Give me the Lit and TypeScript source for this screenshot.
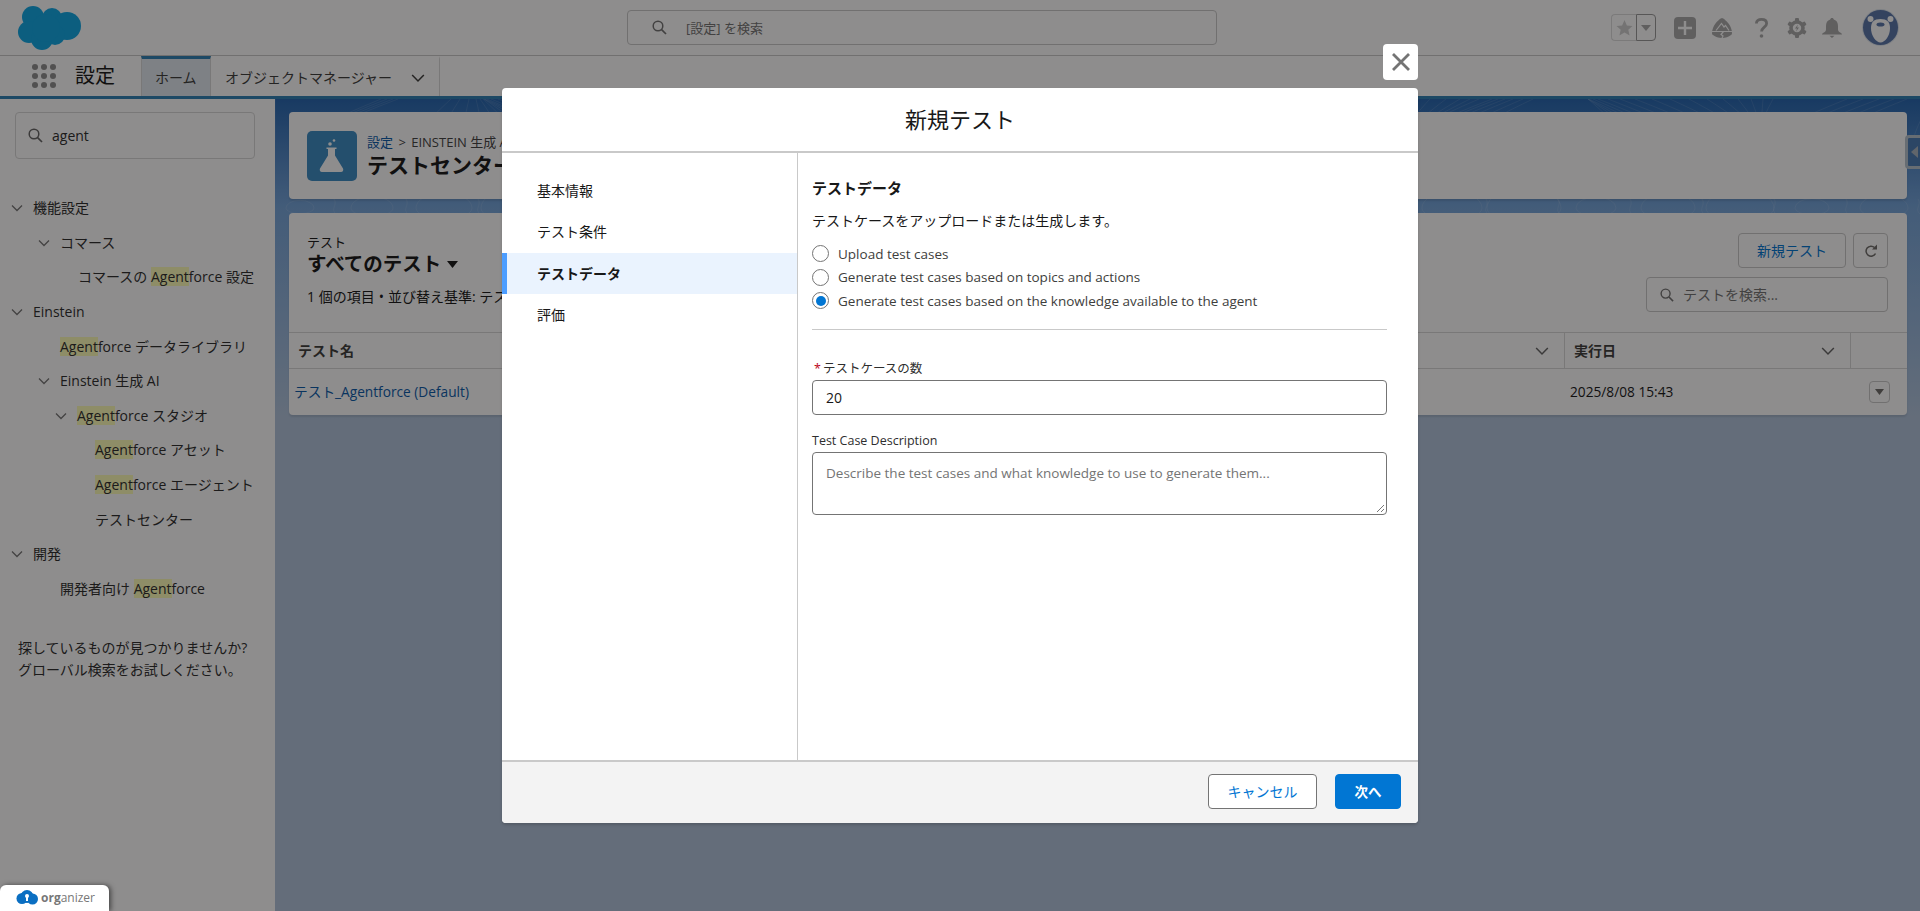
import { LitElement, css, html, svg } from "lit";
import { customElement } from "lit/decorators.js";

interface TreeRow {
  text: string;
  indent: number;
  open?: boolean;
}

const TREE: TreeRow[] = [
  { text: "機能設定", indent: 33, open: true },
  { text: "コマース", indent: 60, open: true },
  { text: "コマースの Agentforce 設定", indent: 78 },
  { text: "Einstein", indent: 33, open: true },
  { text: "Agentforce データライブラリ", indent: 60 },
  { text: "Einstein 生成 AI", indent: 60, open: true },
  { text: "Agentforce スタジオ", indent: 77, open: true },
  { text: "Agentforce アセット", indent: 95 },
  { text: "Agentforce エージェント", indent: 95 },
  { text: "テストセンター", indent: 95 },
  { text: "開発", indent: 33, open: true },
  { text: "開発者向け Agentforce", indent: 60 },
];

const STEPS = ["基本情報", "テスト条件", "テストデータ", "評価"];

const RADIOS = [
  "Upload test cases",
  "Generate test cases based on topics and actions",
  "Generate test cases based on the knowledge available to the agent",
];

const chevron = (size = 12) => html`
  <svg class="chev" width=${size} height=${size} viewBox="0 0 12 12">
    <path d="M1 3.5 6 8.5 11 3.5" fill="none" stroke="currentColor" stroke-width="1.3" />
  </svg>
`;

const searchIcon = (size = 15) => html`
  <svg width=${size} height=${size} viewBox="0 0 15 15">
    <circle cx="6" cy="6" r="4.8" fill="none" stroke="currentColor" stroke-width="1.5" />
    <path d="M9.6 9.6 14 14" fill="none" stroke="currentColor" stroke-width="1.7" />
  </svg>
`;

// contour lines behind the cards
function contours() {
  const paths = [];
  for (let i = 0; i < 170; i++) {
    if (Math.sin(i * 0.55) + Math.sin(i * 0.21) > 0.5) continue;
    const x = 275 + i * 10 + 14 * Math.sin(i * 0.4);
    const lean = 34 * Math.sin(i * 0.17);
    paths.push(
      `M${(x + lean).toFixed(0)} 99 C${x.toFixed(0)} 112 ${(x - lean).toFixed(0)} 125 ${(x - lean * 1.5).toFixed(0)} 140`
    );
  }
  for (let i = 0; i < 24; i++) {
    const cx = 300 + i * 72;
    const r = 14 + ((i * 7) % 24);
    paths.push(`M${cx - r} 208 a${r} ${r * 0.55} 0 1 1 ${r * 2} 0 a${r} ${r * 0.4} 0 1 1 ${-r * 2} 0`);
    paths.push(`M${cx + 34} 199 C${cx + 38} 205 ${cx + 30} 209 ${cx + 36} 214`);
  }
  return paths.map(
    (d) => svg`<path d=${d} fill="none" stroke="#fff" stroke-opacity="0.1" stroke-width="1" />`
  );
}

@customElement("app-root")
export class AppRoot extends LitElement {
  static styles = css`
    :host {
      display: block;
      position: relative;
      height: 100vh;
      overflow: hidden;
      background: #fff;
      color: #181818;
      font: 14px/20px "Open Sans", "Noto Sans CJK JP", sans-serif;
    }
    svg {
      display: block;
      flex: none;
    }
    .page {
      display: flex;
      flex-direction: column;
      height: 100%;
    }

    /* global header */
    .top {
      display: grid;
      grid-template-columns: 627px 590px 1fr;
      align-items: center;
      height: 55px;
      flex: none;
      border-bottom: 1px solid #c9c9c9;
      box-sizing: content-box;
    }
    .logo {
      margin-left: 18px;
    }
    .global-search {
      display: flex;
      align-items: center;
      gap: 19px;
      height: 35px;
      padding-left: 24px;
      box-sizing: border-box;
      border: 1px solid #c9c9c9;
      border-radius: 4px;
      color: #747474;
      font-size: 13px;
    }
    .top-icons {
      display: flex;
      align-items: center;
      justify-content: flex-end;
      padding-right: 21px;
      color: #ababab;
    }
    .fav {
      display: flex;
      height: 27px;
      margin-right: 18px;
    }
    .fav span {
      display: flex;
      align-items: center;
      justify-content: center;
      box-sizing: border-box;
    }
    .fav .star {
      width: 25px;
      border: 1px solid #ddd;
      border-right: 0;
      border-radius: 4px 0 0 4px;
    }
    .fav .more {
      width: 20px;
      border: 1px solid #9a9a9a;
      border-radius: 0 4px 4px 0;
    }
    .avatar {
      margin-left: 20px;
    }

    /* app nav */
    .nav {
      display: flex;
      height: 40px;
      flex: none;
      align-items: stretch;
    }
    .waffle {
      display: grid;
      grid-template-columns: repeat(3, 6px);
      gap: 3px;
      align-content: center;
      margin-left: 32px;
      width: 43px;
    }
    .waffle i {
      width: 6px;
      height: 6px;
      border-radius: 50%;
      background: #8f8f8f;
    }
    .app-name {
      width: 66px;
      font-size: 20px;
      line-height: 40px;
    }
    .tab {
      display: flex;
      align-items: center;
      padding: 0 14px;
      color: #3e3e3c;
      border-top: 3px solid transparent;
      box-sizing: border-box;
      white-space: nowrap;
    }
    .tab.home {
      width: 70px;
      padding: 0 13px;
      background: #e2e9f0;
      border-top-color: #2f82b5;
      border-right: 1px solid #d8d8d8;
      border-left: 1px solid #d8d8d8;
    }
    .tab.objects {
      width: 229px;
      justify-content: space-between;
      border-right: 1px solid #d8d8d8;
    }
    .stripe {
      height: 3px;
      flex: none;
      background: #2f82b5;
    }

    /* body */
    .body {
      display: flex;
      flex: 1;
      min-height: 0;
    }
    .side {
      width: 275px;
      flex: none;
      box-sizing: border-box;
      padding-top: 13px;
      color: #2e2e2e;
    }
    .side-search {
      display: flex;
      align-items: center;
      gap: 9px;
      height: 47px;
      margin: 0 20px 0 15px;
      padding-left: 12px;
      box-sizing: border-box;
      border: 1px solid #d8d8d8;
      border-radius: 4px;
      color: #666;
    }
    .side-search span {
      color: #2e2e2e;
    }
    .tree {
      margin-top: 32px;
    }
    .row {
      display: flex;
      align-items: center;
      height: 34.6px;
      white-space: nowrap;
      position: relative;
    }
    .row .chev {
      margin-left: -22px;
      margin-right: 10px;
      color: #777;
    }
    mark {
      background: #ffffba;
      color: inherit;
    }
    .miss {
      margin: 31px 0 0 18px;
      line-height: 22px;
    }

    .main {
      flex: 1;
      position: relative;
      padding: 13px 13px 0 14px;
      background: linear-gradient(180deg, #2666b0 0, #75a5db 108px, #b2c5dd 320px);
      overflow: hidden;
    }
    .lines {
      position: absolute;
      left: -275px;
      top: -99px;
    }
    .card {
      position: relative;
      background: #fff;
      border-radius: 4px;
      box-shadow: 0 2px 2px rgba(0, 0, 0, 0.1);
    }
    .head-card {
      display: flex;
      align-items: center;
      gap: 10px;
      height: 87px;
      padding-left: 18px;
      margin-bottom: 14px;
    }
    .flask {
      width: 50px;
      height: 50px;
      border-radius: 5px;
      background: #3c8dc5;
    }
    .crumb {
      font-size: 13px;
      line-height: 18px;
      color: #444;
      white-space: nowrap;
    }
    .crumb a {
      color: #0b5cab;
      margin-right: 2px;
    }
    .crumb i {
      font-style: normal;
      margin-right: 2px;
    }
    .page-title {
      font-size: 21px;
      line-height: 28px;
      font-weight: 700;
      white-space: nowrap;
    }
    .handle {
      position: absolute;
      right: 0;
      top: 36px;
      width: 15px;
      height: 34px;
      box-sizing: border-box;
      border: 3px solid #b8c4d0;
      border-right: 0;
      border-radius: 4px 0 0 4px;
      background: #4a7db5;
      display: flex;
      align-items: center;
      justify-content: center;
    }
    .list-top {
      display: flex;
      justify-content: space-between;
      height: 119px;
      padding: 20px 19px 0 18px;
      box-sizing: border-box;
    }
    .eyebrow {
      font-size: 13px;
      line-height: 18px;
    }
    .list-name {
      display: flex;
      align-items: center;
      gap: 6px;
      font-size: 19.5px;
      line-height: 26px;
      font-weight: 700;
    }
    .meta {
      margin-top: 10px;
      white-space: nowrap;
    }
    .meta i {
      font-style: normal;
      margin: 0 4px;
    }
    .tools {
      display: flex;
      flex-direction: column;
      align-items: flex-end;
      gap: 9px;
    }
    .tool-row {
      display: flex;
      gap: 7px;
    }
    .btn {
      display: flex;
      align-items: center;
      justify-content: center;
      height: 35px;
      box-sizing: border-box;
      border: 1px solid #c9c9c9;
      border-radius: 4px;
      background: #fff;
      color: #0176d3;
    }
    .btn.new {
      width: 108px;
    }
    .btn.icon {
      width: 35px;
      color: #706e6b;
    }
    .list-search {
      display: flex;
      align-items: center;
      gap: 9px;
      width: 242px;
      height: 35px;
      padding-left: 13px;
      box-sizing: border-box;
      border: 1px solid #c9c9c9;
      border-radius: 4px;
      color: #747474;
    }
    .thead,
    .tbody {
      display: grid;
      grid-template-columns: 1fr 286px 56px;
      align-items: center;
    }
    .thead {
      height: 37px;
      border-top: 1px solid #d8d8d8;
      border-bottom: 1px solid #d8d8d8;
      box-sizing: border-box;
      font-weight: 700;
      color: #3e3e3c;
    }
    .th {
      display: flex;
      align-items: center;
      justify-content: space-between;
      height: 100%;
      padding: 0 15px 0 9px;
      box-sizing: border-box;
      border-right: 1px solid #d8d8d8;
    }
    .th .chev {
      color: #666;
    }
    .tbody {
      height: 46px;
      font-size: 13.7px;
    }
    .td-link {
      padding-left: 5px;
      color: #0b5cab;
    }
    .td-date {
      padding-left: 5px;
    }
    .row-menu {
      width: 21px;
      height: 22px;
      margin-left: 18px;
      box-sizing: border-box;
      border: 1px solid #c9c9c9;
      border-radius: 4px;
      display: flex;
      align-items: center;
      justify-content: center;
    }

    /* modal */
    .backdrop {
      position: absolute;
      inset: 0;
      display: flex;
      justify-content: center;
      padding-top: 88px;
      box-sizing: border-box;
      background: rgba(8, 7, 7, 0.46);
    }
    .modal {
      position: relative;
      display: flex;
      flex-direction: column;
      width: 916px;
      height: 735px;
      background: #fff;
      border-radius: 4px;
      box-shadow: 0 2px 3px rgba(0, 0, 0, 0.16);
    }
    .close {
      position: absolute;
      right: 0;
      top: -44px;
      width: 35px;
      height: 36px;
      border-radius: 4px;
      background: #fff;
      display: flex;
      align-items: center;
      justify-content: center;
    }
    .modal-head {
      height: 65px;
      flex: none;
      box-sizing: border-box;
      border-bottom: 2px solid #c9c9c9;
      text-align: center;
      font-size: 22px;
      line-height: 63px;
    }
    .modal-body {
      flex: 1;
      display: flex;
      min-height: 0;
    }
    .steps {
      width: 296px;
      flex: none;
      box-sizing: border-box;
      padding-top: 17px;
      border-right: 1px solid #c9c9c9;
    }
    .step {
      height: 41.3px;
      line-height: 41px;
      padding-left: 35px;
      box-sizing: border-box;
    }
    .step.active {
      padding-left: 30px;
      border-left: 5px solid #4c9dff;
      background: #eaf3fe;
      font-weight: 700;
    }
    .content {
      flex: 1;
      padding: 24px 31px 0 14px;
    }
    .content h2 {
      margin: 0;
      font-size: 15px;
      line-height: 22px;
      font-weight: 700;
    }
    .lead {
      margin-top: 12px;
      line-height: 20px;
    }
    .radios {
      display: flex;
      flex-direction: column;
      gap: 6px;
      margin-top: 14px;
    }
    .radio {
      display: flex;
      align-items: center;
      gap: 9px;
      height: 17.5px;
      font-size: 13.5px;
      color: #3e3e3c;
    }
    .dot {
      width: 17px;
      height: 17px;
      box-sizing: border-box;
      border: 1px solid #747474;
      border-radius: 50%;
      display: flex;
      align-items: center;
      justify-content: center;
      flex: none;
    }
    .dot i {
      width: 10px;
      height: 10px;
      border-radius: 50%;
      background: #0176d3;
    }
    .rule {
      height: 1px;
      margin-top: 19px;
      background: #c9c9c9;
    }
    .label {
      font-size: 12.5px;
      line-height: 16px;
      color: #2e2e2e;
    }
    .label b {
      color: #ba0517;
      font-weight: 400;
      margin: 0 2px 0 2px;
    }
    .label.count {
      margin-top: 31px;
    }
    .label.desc {
      margin-top: 18px;
    }
    .field {
      margin-top: 3px;
      padding-left: 13px;
      box-sizing: border-box;
      border: 1px solid #747474;
      border-radius: 4px;
      height: 35px;
      line-height: 33px;
    }
    .area {
      position: relative;
      height: 63px;
      font-size: 13.5px;
      line-height: 20px;
      padding-top: 10px;
      color: #747474;
    }
    .grip {
      position: absolute;
      right: 1px;
      bottom: 1px;
    }
    .modal-foot {
      display: flex;
      justify-content: flex-end;
      gap: 18px;
      height: 63px;
      flex: none;
      box-sizing: border-box;
      padding: 12px 17px 0 0;
      background: #f3f3f3;
      border-top: 2px solid #c9c9c9;
      border-radius: 0 0 4px 4px;
    }
    .btn.cancel {
      width: 109px;
      border-color: #747474;
    }
    .btn.next {
      width: 66px;
      background: #0176d3;
      border-color: #0176d3;
      color: #fff;
      font-weight: 600;
      font-size: 13.5px;
    }

    .organizer {
      position: absolute;
      left: 0;
      bottom: 0;
      display: flex;
      align-items: center;
      gap: 3px;
      width: 109px;
      height: 26px;
      padding-left: 16px;
      box-sizing: border-box;
      background: #fff;
      border-radius: 6px 6px 0 0;
      box-shadow: 2px 0 5px rgba(0, 0, 0, 0.5);
      color: #777;
      font-size: 12px;
    }
    .organizer b {
      font-weight: 700;
    }
  `;

  private mark(text: string) {
    const at = text.indexOf("Agent");
    if (at < 0) return text;
    return html`${text.slice(0, at)}<mark>Agent</mark>${text.slice(at + 5)}`;
  }

  private renderTop() {
    return html`
      <div class="top">
        <svg class="logo" width="63" height="44" viewBox="0 0 63 44" fill="#0fa8e6">
          <circle cx="15" cy="11" r="11" />
          <circle cx="34" cy="12" r="10" />
          <circle cx="49" cy="20" r="14" />
          <circle cx="11" cy="26" r="11" />
          <circle cx="24" cy="33" r="11" />
          <circle cx="37" cy="29" r="10" />
          <circle cx="28" cy="22" r="14" />
        </svg>
        <div class="global-search">${searchIcon()}<span>[設定] を検索</span></div>
        <div class="top-icons">
          <div class="fav">
            <span class="star">
              <svg width="17" height="16" viewBox="0 0 17 16"><path fill="#d0d0d0" d="M8.5 0l2.4 5.4 5.6.5-4.2 3.8 1.3 5.8-5.1-3-5.1 3 1.3-5.8L.5 5.9l5.6-.5z" /></svg>
            </span>
            <span class="more">
              <svg width="10" height="6" viewBox="0 0 10 6"><path fill="#ababab" d="M0 0h10L5 6z" /></svg>
            </span>
          </div>
          <svg width="22" height="22" viewBox="0 0 22 22">
            <rect width="22" height="22" rx="4" fill="#ababab" />
            <path d="M11 4v14M4 11h14" stroke="#fff" stroke-width="2.4" />
          </svg>
          <svg style="margin-left:16px" width="20" height="20" viewBox="0 0 20 20">
            <path fill="#ababab" d="M10 0c1.200 0 4.500 3 6.500 5.500C18.500 8 20 11.500 20 15c0 1-.3 1.600-1 2-2.300 1.700-5.500 3-9 3s-6.700-1.300-9-3c-.7-.4-1-1-1-2 0-3.500 1.500-7 3.500-9.500C5.500 3 8.800 0 10 0z" />
            <path fill="none" stroke="#fff" stroke-width="1.200" d="M4 12.500 9.500 5.500l2.500 3.500 1.500-1.500 3.500 5M0 13.500h20M11.500 13.500l-2.500 3 2 1.500-1 2" />
          </svg>
          <svg style="margin-left:23px" width="13" height="20" viewBox="0 0 13 20">
            <path fill="none" stroke="#ababab" stroke-width="2.800" d="M1.400 5.500C1.400 2.800 3.500 1.400 6.500 1.400s5.100 1.500 5.100 4c0 3.800-5 3.700-5 8.200" />
            <circle cx="6.500" cy="18" r="1.800" fill="#ababab" />
          </svg>
          <svg style="margin-left:19px" width="20" height="20" viewBox="-10 -10 20 20">
            <g fill="#ababab">
              ${[0, 60, 120, 180, 240, 300].map(
                (a) => svg`<rect x="-2" y="-10" width="4" height="5" rx="1" transform="rotate(${a})" />`
              )}
            </g>
            <circle r="6" fill="none" stroke="#ababab" stroke-width="3.600" />
            <path fill="#ababab" d="M1-3.500-2 .5H0L-1 3.500 2-.5H0z" />
          </svg>
          <svg style="margin-left:15px" width="20" height="20" viewBox="0 0 20 20">
            <path fill="#ababab" d="M10 0c1 0 1.700.7 1.800 1.500C14.700 2.300 16 4.800 16 8v3.500c0 1.500 1 2.500 3 3.500.8.500 1 1 1 1.500H0c0-.5.2-1 1-1.500 2-1 3-2 3-3.500V8c0-3.200 1.300-5.700 4.200-6.500C8.300.7 9 0 10 0zM7.500 17.700h5L10 20z" />
          </svg>
          <svg class="avatar" width="37" height="37" viewBox="0 0 37 37">
            <circle cx="18.500" cy="18.500" r="18.500" fill="#dfe7ef" />
            <circle cx="18.500" cy="18.500" r="17.500" fill="#5976aa" />
            <circle cx="8.500" cy="10" r="3" fill="#fff" />
            <circle cx="28.500" cy="10" r="3" fill="#fff" />
            <path fill="#fff" d="M18.500 10C25 10 28 13 28 19c0 8-5 14.500-9.500 14.500S9 27 9 19c0-6 3-9 9.500-9z" />
            <ellipse cx="18.500" cy="15.500" rx="4" ry="2" fill="#5976aa" />
          </svg>
        </div>
      </div>
    `;
  }

  private renderNav() {
    return html`
      <div class="nav">
        <div class="waffle">${Array.from({ length: 9 }, () => html`<i></i>`)}</div>
        <div class="app-name">設定</div>
        <div class="tab home">ホーム</div>
        <div class="tab objects">オブジェクトマネージャー ${chevron(14)}</div>
      </div>
      <div class="stripe"></div>
    `;
  }

  private renderSide() {
    return html`
      <aside class="side">
        <div class="side-search">${searchIcon()}<span>agent</span></div>
        <div class="tree">
          ${TREE.map(
            (r) => html`
              <div class="row" style="padding-left:${r.indent}px">
                ${r.open ? chevron() : ""}<span>${this.mark(r.text)}</span>
              </div>
            `
          )}
        </div>
        <div class="miss">探しているものが見つかりませんか?<br />グローバル検索をお試しください。</div>
      </aside>
    `;
  }

  private renderMain() {
    return html`
      <main class="main">
        <svg class="lines" width="1920" height="911">${contours()}</svg>
        <div class="card head-card">
          <div class="flask">
            <svg width="50" height="50" viewBox="0 0 50 50">
              <circle cx="23" cy="13" r="1.800" fill="#fff" />
              <circle cx="27" cy="9.500" r="1.300" fill="#fff" />
              <path fill="#fff" d="M19.500 16.500h10v1.500h-1.500v6.500L36 37.500c.8 1.800-.2 3.500-2 3.500H15c-1.800 0-2.800-1.700-2-3.500l8-13V18h-1.500z" />
            </svg>
          </div>
          <div>
            <div class="crumb"><a>設定</a> <i>&gt;</i> EINSTEIN 生成 AI</div>
            <div class="page-title">テストセンター</div>
          </div>
        </div>
        <div class="handle">
          <svg width="7" height="12" viewBox="0 0 7 12"><path fill="#aab5c0" d="M7 0v12L0 6z" /></svg>
        </div>
        <div class="card">
          <div class="list-top">
            <div>
              <div class="eyebrow">テスト</div>
              <div class="list-name">
                すべてのテスト
                <svg width="11" height="7" viewBox="0 0 11 7"><path fill="#181818" d="M0 0h11L5.500 7z" /></svg>
              </div>
              <div class="meta">1 個の項目<i>•</i>並び替え基準: テスト名</div>
            </div>
            <div class="tools">
              <div class="tool-row">
                <div class="btn new">新規テスト</div>
                <div class="btn icon">
                  <svg width="14" height="14" viewBox="0 0 14 14">
                    <path fill="none" stroke="currentColor" stroke-width="1.500" d="M11.500 9.500A5 5 0 1 1 10.500 3.500" />
                    <path fill="currentColor" d="M13 .5v5H8z" />
                  </svg>
                </div>
              </div>
              <div class="list-search">${searchIcon(14)}<span>テストを検索...</span></div>
            </div>
          </div>
          <div class="thead">
            <div class="th">テスト名 ${chevron(14)}</div>
            <div class="th">実行日 ${chevron(14)}</div>
            <div></div>
          </div>
          <div class="tbody">
            <div class="td-link">テスト_Agentforce (Default)</div>
            <div class="td-date">2025/8/08 15:43</div>
            <div class="row-menu">
              <svg width="9" height="6" viewBox="0 0 9 6"><path fill="#706e6b" d="M0 0h9L4.500 6z" /></svg>
            </div>
          </div>
        </div>
      </main>
    `;
  }

  private renderModal() {
    return html`
      <div class="backdrop">
        <section class="modal">
          <div class="close">
            <svg width="20" height="20" viewBox="0 0 20 20">
              <path d="M2 2 18 18M18 2 2 18" stroke="#747474" stroke-width="2.800" />
            </svg>
          </div>
          <div class="modal-head">新規テスト</div>
          <div class="modal-body">
            <nav class="steps">
              ${STEPS.map(
                (s, i) => html`<div class="step ${i === 2 ? "active" : ""}">${s}</div>`
              )}
            </nav>
            <div class="content">
              <h2>テストデータ</h2>
              <div class="lead">テストケースをアップロードまたは生成します。</div>
              <div class="radios">
                ${RADIOS.map(
                  (r, i) => html`
                    <div class="radio">
                      <span class="dot">${i === 2 ? html`<i></i>` : ""}</span>${r}
                    </div>
                  `
                )}
              </div>
              <div class="rule"></div>
              <div class="label count"><b>*</b>テストケースの数</div>
              <div class="field">20</div>
              <div class="label desc">Test Case Description</div>
              <div class="field area">
                Describe the test cases and what knowledge to use to generate them...
                <svg class="grip" width="9" height="9" viewBox="0 0 9 9">
                  <path d="M1 8 8 1M5 8 8 5" stroke="#777" stroke-width="1" />
                </svg>
              </div>
            </div>
          </div>
          <div class="modal-foot">
            <div class="btn cancel">キャンセル</div>
            <div class="btn next">次へ</div>
          </div>
        </section>
      </div>
      <div class="organizer">
        <svg width="22" height="16" viewBox="0 0 22 16">
          <circle cx="6" cy="8.500" r="5.500" fill="#0b6fc2" />
          <circle cx="11" cy="6.500" r="6.500" fill="#0b6fc2" />
          <circle cx="16.500" cy="9" r="5.500" fill="#0b6fc2" />
          <circle cx="11" cy="6" r="2" fill="#fff" />
          <rect x="10" y="6" width="2" height="5" fill="#fff" />
        </svg>
        <span><b>org</b>anizer</span>
      </div>
    `;
  }

  render() {
    return html`
      <div class="page">
        ${this.renderTop()} ${this.renderNav()}
        <div class="body">${this.renderSide()} ${this.renderMain()}</div>
      </div>
      ${this.renderModal()}
    `;
  }
}
